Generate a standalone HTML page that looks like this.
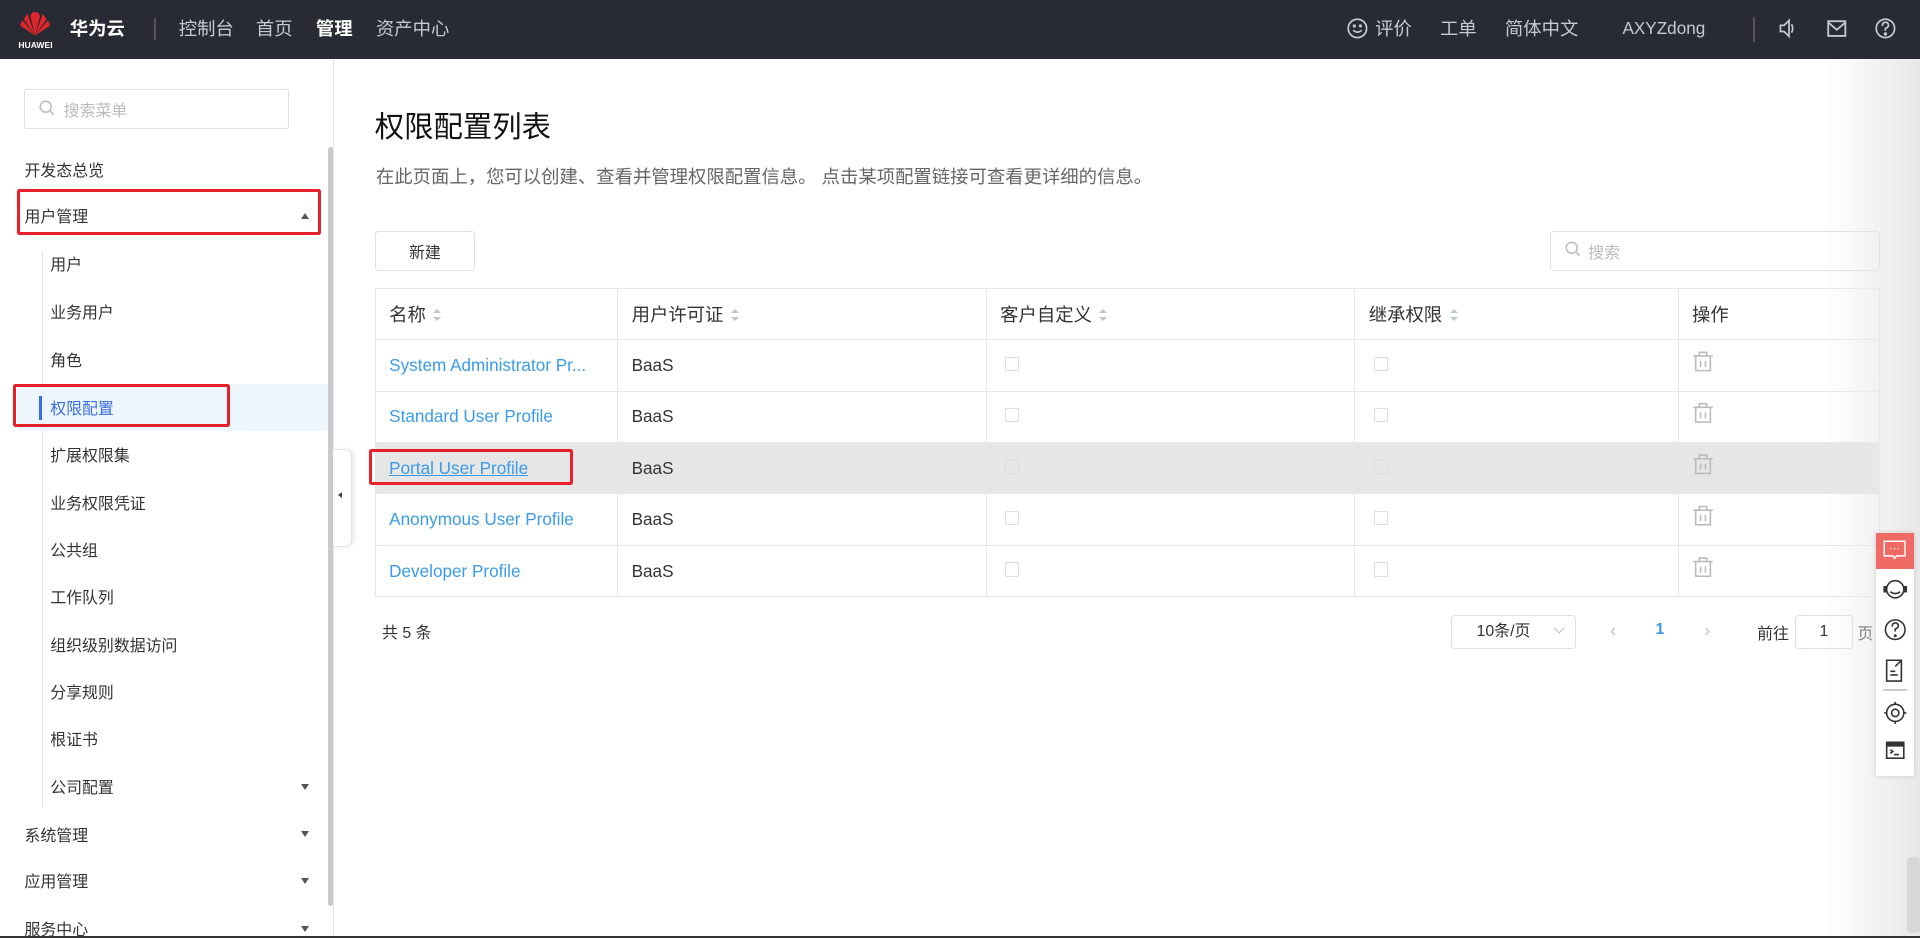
<!DOCTYPE html>
<html><head><meta charset="utf-8"><style>
html,body{margin:0;padding:0;width:1920px;height:938px;overflow:hidden;background:#fff}
#r{zoom:1.22449;width:1568px;height:766px;position:relative;font-family:"Liberation Sans","Noto Sans CJK SC",sans-serif;color:#333;overflow:hidden}
.a{position:absolute;white-space:nowrap}
.hd{left:0;top:0;width:1568px;height:48px;background:#282b33}
.nav{color:#c6c9cf;font-size:15px;top:12px}
.sb{left:0;top:48px;width:272px;height:718px;background:#fff;border-right:1px solid #e6e6e6}
.mi{font-size:13px;color:#333}
.si{font-size:13px;color:#333;left:41px}
.red{border:3px solid #e8202a;border-radius:2px;box-sizing:border-box}
.tb{left:306px;top:235px;width:1229px;border-collapse:collapse;font-size:14px}
.tb td{border:1px solid #e4e7ed;height:41px;padding:0 0 0 11px;box-sizing:border-box}
.tb tr.h td{font-size:15px;color:#333}
.lnk{color:#3a9be8}
.cb{display:inline-block;width:10px;height:10px;border:1px solid #ddd;border-radius:1px;margin-left:4px}
.arr{display:inline-block;vertical-align:middle;margin-left:6px;width:8px;height:12px;position:relative}
.arr:before{content:"";position:absolute;top:0;left:0;border:4px solid transparent;border-bottom:4px solid #c0c4cc;border-top:none}
.arr:after{content:"";position:absolute;top:7px;left:0;border:4px solid transparent;border-top:4px solid #c0c4cc;border-bottom:none}
.bx{display:flex;align-items:center;justify-content:center}
</style></head><body><div id="r">
<div class="a hd"></div>
<svg class="a" style="left:15px;top:9px" width="28" height="22" viewBox="0 0 28 22"><g fill="#e0252b"><path d="M14 20 L10 4 Q12 0 14 1 Z"/><path d="M14 20 L18 4 Q16 0 14 1 Z"/><path d="M14 20 L5 7 Q6 3 8 3 Z"/><path d="M14 20 L23 7 Q22 3 20 3 Z"/><path d="M14 20 L2 12 Q2 9 4 8 Z"/><path d="M14 20 L26 12 Q26 9 24 8 Z"/></g></svg>
<div class="a" style="left:15px;top:33px;color:#fff;font-size:7px;font-weight:bold">HUAWEI</div>
<div class="a" style="left:57px;top:12px;color:#fff;font-size:15px;font-weight:bold">华为云</div>
<div class="a" style="left:126px;top:15px;width:1px;height:18px;background:#555"></div>
<div class="a nav" style="left:146px">控制台</div>
<div class="a nav" style="left:209px">首页</div>
<div class="a nav" style="left:258px;color:#fff;font-weight:bold">管理</div>
<div class="a nav" style="left:307px">资产中心</div>
<svg class="a" style="left:1100px;top:15px" width="17" height="17" viewBox="0 0 17 17" fill="none" stroke="#c6c9cf" stroke-width="1.4"><circle cx="8.5" cy="8.5" r="7.5"/><path d="M5 10 Q8.5 13 12 10"/><circle cx="6" cy="6.5" r=".6" fill="#c6c9cf"/><circle cx="11" cy="6.5" r=".6" fill="#c6c9cf"/></svg>
<div class="a nav" style="left:1123px">评价</div>
<div class="a nav" style="left:1176px">工单</div>
<div class="a nav" style="left:1229px">简体中文</div>
<div class="a nav" style="left:1325px;font-size:14px;top:15px">AXYZdong</div>
<div class="a" style="left:1432px;top:14px;width:1px;height:20px;background:#555"></div>
<svg class="a" style="left:1452px;top:15px" width="17" height="17" viewBox="0 0 17 17" fill="none" stroke="#c6c9cf" stroke-width="1.4"><path d="M2 6h3l4-4v13l-4-4H2z"/><path d="M11 5q2 3.5 0 7"/></svg>
<svg class="a" style="left:1492px;top:16px" width="16" height="14" viewBox="0 0 16 14" fill="none" stroke="#c6c9cf" stroke-width="1.5"><rect x="1" y="1" width="14" height="12"/><path d="M1 2l7 6 7-6"/></svg>
<svg class="a" style="left:1531px;top:15px" width="17" height="17" viewBox="0 0 17 17" fill="none" stroke="#c6c9cf" stroke-width="1.4"><circle cx="8.5" cy="8.5" r="7.5"/><path d="M6 6.5q0-3 2.5-3t2.5 2.5q0 1.5-2.5 2.5v2"/><circle cx="8.5" cy="13" r=".7" fill="#c6c9cf"/></svg>

<div class="a sb"></div>
<div class="a" style="left:20px;top:73px;width:216px;height:32px;border:1px solid #dcdfe6;border-radius:2px;box-sizing:border-box"></div>
<svg class="a" style="left:32px;top:82px" width="13" height="13" viewBox="0 0 13 13" fill="none" stroke="#bbb" stroke-width="1.2"><circle cx="5.5" cy="5.5" r="4.5"/><path d="M9 9l3 3"/></svg>
<div class="a" style="left:52px;top:80px;font-size:13px;color:#bbb">搜索菜单</div>
<div class="a" style="left:268px;top:120px;width:4px;height:620px;background:#c8cacd;border-radius:2px"></div>
<div class="a mi" style="left:20px;top:129px">开发态总览</div>
<div class="a mi" style="left:20px;top:167px">用户管理</div>
<div class="a" style="left:246px;top:174px;border:4px solid transparent;border-bottom:5px solid #555;border-top:none"></div>
<div class="a red" style="left:14px;top:154px;width:248px;height:38px"></div>
<div class="a" style="left:34px;top:205px;width:1px;height:455px;background:#e4e4e4"></div>
<div class="a si" style="top:206px">用户</div>
<div class="a si" style="top:245px">业务用户</div>
<div class="a si" style="top:284px">角色</div>
<div class="a" style="left:14px;top:314px;width:254px;height:38px;background:#eef6fd"></div>
<div class="a" style="left:32px;top:323px;width:2px;height:20px;background:#3a6fe8"></div>
<div class="a si" style="top:323px;color:#3a6fe8">权限配置</div>
<div class="a red" style="left:11px;top:314px;width:177px;height:35px"></div>
<div class="a si" style="top:362px">扩展权限集</div>
<div class="a si" style="top:401px">业务权限凭证</div>
<div class="a si" style="top:439px">公共组</div>
<div class="a si" style="top:478px">工作队列</div>
<div class="a si" style="top:517px">组织级别数据访问</div>
<div class="a si" style="top:555px">分享规则</div>
<div class="a si" style="top:594px">根证书</div>
<div class="a si" style="top:633px">公司配置</div>
<div class="a" style="left:246px;top:640px;border:4px solid transparent;border-top:5px solid #555;border-bottom:none"></div>
<div class="a mi" style="left:20px;top:672px">系统管理</div>
<div class="a" style="left:246px;top:679px;border:4px solid transparent;border-top:5px solid #555;border-bottom:none"></div>
<div class="a mi" style="left:20px;top:710px">应用管理</div>
<div class="a" style="left:246px;top:717px;border:4px solid transparent;border-top:5px solid #555;border-bottom:none"></div>
<div class="a mi" style="left:20px;top:749px">服务中心</div>
<div class="a" style="left:246px;top:756px;border:4px solid transparent;border-top:5px solid #555;border-bottom:none"></div>
<div class="a" style="left:272px;top:367px;width:15px;height:78px;background:#fff;border:1px solid #e4e4e4;border-left:none;border-radius:0 6px 6px 0;box-shadow:2px 0 3px rgba(0,0,0,.08)"></div>
<div class="a" style="left:276px;top:402px;border:3px solid transparent;border-right:4px solid #444;border-left:none"></div>

<div class="a" style="left:306px;top:85px;font-size:24px;color:#111">权限配置列表</div>
<div class="a" style="left:307px;top:133px;font-size:15px;color:#666">在此页面上，您可以创建、查看并管理权限配置信息。 点击某项配置链接可查看更详细的信息。</div>
<div class="a bx" style="left:306px;top:189px;width:82px;height:32px;border:1px solid #dcdfe6;border-radius:3px;box-sizing:border-box;font-size:13px">新建</div>
<div class="a" style="left:1266px;top:189px;width:269px;height:32px;border:1px solid #dcdfe6;border-radius:3px;box-sizing:border-box"></div>
<svg class="a" style="left:1278px;top:197px" width="13" height="13" viewBox="0 0 13 13" fill="none" stroke="#bbb" stroke-width="1.2"><circle cx="5.5" cy="5.5" r="4.5"/><path d="M9 9l3 3"/></svg>
<div class="a" style="left:1297px;top:196px;font-size:13px;color:#bbb">搜索</div>

<table class="a tb">
<tr class="h" style="height:42px"><td style="width:198px">名称<span class="arr"></span></td><td style="width:301px">用户许可证<span class="arr"></span></td><td style="width:301px">客户自定义<span class="arr"></span></td><td style="width:264px">继承权限<span class="arr"></span></td><td>操作</td></tr>
<tr style="height:42px"><td class="lnk">System Administrator Pr...</td><td>BaaS</td><td><span class="cb"></span></td><td><span class="cb"></span></td><td></td></tr>
<tr style="height:42px"><td class="lnk">Standard User Profile</td><td>BaaS</td><td><span class="cb"></span></td><td><span class="cb"></span></td><td></td></tr>
<tr style="height:42px;background:#e6e6e6"><td class="lnk" style="text-decoration:underline">Portal User Profile</td><td>BaaS</td><td><span class="cb"></span></td><td><span class="cb"></span></td><td></td></tr>
<tr style="height:42px"><td class="lnk">Anonymous User Profile</td><td>BaaS</td><td><span class="cb"></span></td><td><span class="cb"></span></td><td></td></tr>
<tr style="height:42px"><td class="lnk">Developer Profile</td><td>BaaS</td><td><span class="cb"></span></td><td><span class="cb"></span></td><td></td></tr>
</table>
<svg class="a" style="left:1382px;top:287px" width="18" height="200" viewBox="0 0 18 200" fill="none" stroke="#bbb" stroke-width="1.3">
<g id="t"><path d="M1 4h16M6 4V1h6v3M3 4v12h12V4M7 8v5M11 8v5"/></g>
<use href="#t" y="42"/><use href="#t" y="84"/><use href="#t" y="126"/><use href="#t" y="168"/></svg>
<div class="a red" style="left:301px;top:367px;width:167px;height:29px"></div>

<div class="a" style="left:312px;top:506px;font-size:13px">共 5 条</div>
<div class="a" style="left:1185px;top:502px;width:102px;height:28px;border:1px solid #dcdfe6;border-radius:3px;box-sizing:border-box;font-size:13px;line-height:26px;padding-left:20px">10条/页</div>
<div class="a" style="left:1270px;top:510px;width:6px;height:6px;border-right:1px solid #bbb;border-bottom:1px solid #bbb;transform:rotate(45deg)"></div>
<div class="a" style="left:1315px;top:506px;font-size:14px;color:#bbb">‹</div>
<div class="a" style="left:1352px;top:507px;font-size:13px;color:#3a9be8;font-weight:bold">1</div>
<div class="a" style="left:1392px;top:506px;font-size:14px;color:#bbb">›</div>
<div class="a" style="left:1435px;top:507px;font-size:13px">前往</div>
<div class="a bx" style="left:1466px;top:502px;width:47px;height:28px;border:1px solid #dcdfe6;border-radius:3px;box-sizing:border-box;font-size:13px">1</div>
<div class="a" style="left:1517px;top:507px;font-size:13px">页</div>

<div class="a" style="left:1490px;top:48px;width:78px;height:718px;background:linear-gradient(90deg,rgba(235,235,235,0),#e8e8e8)"></div>
<div class="a" style="left:1532px;top:435px;width:31px;height:199px;background:#fff;box-shadow:0 0 4px rgba(0,0,0,.15)"></div>
<div class="a" style="left:1532px;top:435px;width:31px;height:30px;background:#ef6a64"></div>
<svg class="a" style="left:1538px;top:441px" width="19" height="18" viewBox="0 0 19 18" fill="none" stroke="#fff" stroke-width="1.2"><path d="M1 1h17v12h-7l-1.5 2-1.5-2H1z"/><path d="M6 7h1M9 7h1M12 7h1"/></svg>
<svg class="a" style="left:1538px;top:471px" width="20" height="160" viewBox="0 0 20 160" fill="none" stroke="#333" stroke-width="1.3">
<circle cx="10" cy="10" r="7"/><path d="M6 12q4 3 8 0"/><rect x="1" y="8" width="2" height="4" fill="#333"/><rect x="17" y="8" width="2" height="4" fill="#333"/>
<circle cx="10" cy="43" r="8"/><path d="M7.5 40.5q0-3 2.5-3t2.5 2.5q0 1.5-2.5 2.5v2"/><circle cx="10" cy="48" r=".6" fill="#333"/>
<path d="M3 68h12v17H3z"/><path d="M6 77h4M6 80h6M10 73l5-5"/>
<circle cx="10" cy="111" r="7"/><circle cx="10" cy="111" r="3"/><path d="M10 102v2M10 118v2M1 111h2M17 111h2"/>
<rect x="3" y="135" width="14" height="13"/><path d="M3 137h14" stroke-width="3"/><path d="M6 141l2 1.5-2 1.5M9 145h4"/>
</svg>
<div class="a" style="left:1538px;top:563px;width:19px;height:1px;background:#ccc"></div>
<div class="a" style="left:1557px;top:700px;width:11px;height:62px;background:#d8d8d8;border-radius:3px"></div>
<div class="a" style="left:0;top:764px;width:1568px;height:2px;background:#333"></div>
</div></body></html>
